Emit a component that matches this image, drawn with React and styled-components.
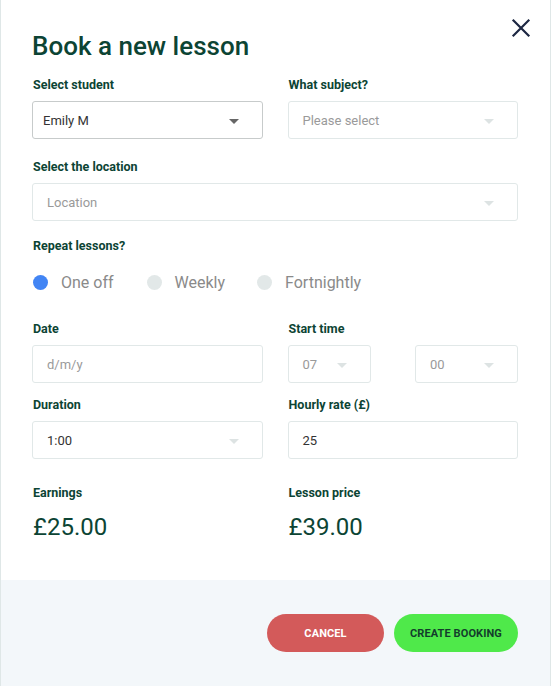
import React, { useState } from 'react'
import styled, { createGlobalStyle } from 'styled-components'

const GlobalStyle = createGlobalStyle`
  html, body {
    margin: 0;
    padding: 0;
    background: #ffffff;
  }
  body {
    font-family: Roboto, "Liberation Sans", sans-serif;
  }
  * {
    box-sizing: border-box;
  }
`

const Modal = styled.div`
  width: 551px;
  height: 686px;
  display: flex;
  flex-direction: column;
  background: #ffffff;
  border-left: 1px solid #dfe7e7;
  border-right: 1px solid #dfe7e7;
`

const Body = styled.div`
  flex: 1;
  padding: 28px 32px 0 31px;
  position: relative;
`

const Title = styled.h1`
  margin: 0 0 13px 0;
  font-size: 26px;
  font-weight: 500;
  color: #0c4434;
  line-height: 36px;
`

const Close = styled.button`
  position: absolute;
  top: 14px;
  right: 15px;
  width: 28px;
  height: 28px;
  border: none;
  background: none;
  padding: 0;
  cursor: pointer;
`

const Row = styled.div`
  display: grid;
  grid-template-columns: ${p => p.$cols || '1fr 1fr'};
  column-gap: 25px;
  margin-bottom: ${p => p.$mb || 0}px;
`

const Field = styled.div`
  display: flex;
  flex-direction: column;
  min-width: 0;
`

const Label = styled.label`
  font-size: 12.5px;
  font-weight: 700;
  color: #0c4434;
  line-height: 16px;
  margin-bottom: ${p => p.$mb ?? 8}px;
  padding-left: 1px;
`

const Box = styled.div`
  height: 38px;
  display: flex;
  align-items: center;
  justify-content: space-between;
  padding: 0 23px 0 ${p => p.$pl || 14}px;
  border: 1px solid ${p => (p.$strong ? '#c7cbcb' : '#e1e8e8')};
  border-radius: 3px;
  background: #fff;
  font-size: 13px;
  color: ${p => (p.$muted ? '#9a9a9a' : '#333333')};
`

const Caret = styled.span`
  width: 0;
  height: 0;
  border-left: 5px solid transparent;
  border-right: 5px solid transparent;
  border-top: 5px solid ${p => (p.$dark ? '#666' : '#dde3e3')};
  margin-top: 2px;
`

const TimeRow = styled.div`
  display: grid;
  grid-template-columns: 83px 103px;
  justify-content: space-between;
`

const Radios = styled.div`
  display: flex;
  align-items: center;
  margin-top: 19px;
  margin-bottom: 29px;
  padding-left: 1px;
`

const RadioItem = styled.div`
  display: flex;
  align-items: center;
  margin-right: ${p => p.$mr}px;
  cursor: pointer;
`

const Dot = styled.span`
  width: 15px;
  height: 15px;
  border-radius: 50%;
  background: ${p => (p.$on ? '#4285f4' : '#e2e8e8')};
  margin-right: 13px;
`

const RadioText = styled.span`
  font-size: 16px;
  color: #8a8a8a;
`

const Amount = styled.div`
  font-size: 24px;
  color: #0c4434;
  margin-top: 12px;
  padding-left: 1px;
`

const Footer = styled.div`
  height: 106px;
  background: #f3f7fa;
  display: flex;
  justify-content: flex-end;
  align-items: flex-start;
  gap: 10px;
  padding: 34px 32px 0 0;
`

const Button = styled.button`
  height: 38px;
  border: none;
  border-radius: 19px;
  padding: 0 ${p => p.$px || 0}px;
  min-width: ${p => p.$w}px;
  background: ${p => p.$bg};
  color: ${p => p.$fg};
  font-family: Roboto, "Liberation Sans", sans-serif;
  font-size: 11px;
  font-weight: 700;
  letter-spacing: 0.1px;
  cursor: pointer;
`

const SelectBox = ({ value, muted, strong, dark, pl }) => (
  <Box $muted={muted} $strong={strong} $pl={pl}>
    <span>{value}</span>
    <Caret $dark={dark} />
  </Box>
)

export default function App() {
  const [repeat, setRepeat] = useState('One off')
  const options = [
    ['One off', 33],
    ['Weekly', 32],
    ['Fortnightly', 0],
  ]

  return (
    <>
      <GlobalStyle />
      <Modal>
        <Body>
          <Close aria-label="Close">
            <svg width="28" height="28" viewBox="0 0 28 28">
              <path d="M6.5 6.5 L21.5 21.5 M21.5 6.5 L6.5 21.5" stroke="#1d2742" strokeWidth="2.2" strokeLinecap="square" />
            </svg>
          </Close>
          <Title>Book a new lesson</Title>

          <Row $mb={20}>
            <Field>
              <Label>Select student</Label>
              <SelectBox value="Emily M" strong dark pl={10} />
            </Field>
            <Field>
              <Label>What subject?</Label>
              <SelectBox value="Please select" muted />
            </Field>
          </Row>

          <Row $cols="1fr" $mb={17}>
            <Field>
              <Label>Select the location</Label>
              <SelectBox value="Location" muted />
            </Field>
          </Row>

          <Label as="div" $mb={0}>Repeat lessons?</Label>
          <Radios>
            {options.map(([name, mr]) => (
              <RadioItem key={name} $mr={mr} onClick={() => setRepeat(name)}>
                <Dot $on={repeat === name} />
                <RadioText>{name}</RadioText>
              </RadioItem>
            ))}
          </Radios>

          <Row $mb={14}>
            <Field>
              <Label>Date</Label>
              <Box $muted>d/m/y</Box>
            </Field>
            <Field>
              <Label>Start time</Label>
              <TimeRow>
                <SelectBox value="07" muted />
                <SelectBox value="00" muted />
              </TimeRow>
            </Field>
          </Row>

          <Row $mb={26}>
            <Field>
              <Label>Duration</Label>
              <SelectBox value="1:00" />
            </Field>
            <Field>
              <Label>Hourly rate (£)</Label>
              <Box>25</Box>
            </Field>
          </Row>

          <Row>
            <Field>
              <Label $mb={0}>Earnings</Label>
              <Amount>£25.00</Amount>
            </Field>
            <Field>
              <Label $mb={0}>Lesson price</Label>
              <Amount>£39.00</Amount>
            </Field>
          </Row>
        </Body>
        <Footer>
          <Button $bg="#d35a5a" $fg="#ffffff" $w={117}>CANCEL</Button>
          <Button $bg="#4fe94a" $fg="#133d2c" $w={124} $px={16}>CREATE BOOKING</Button>
        </Footer>
      </Modal>
    </>
  )
}
